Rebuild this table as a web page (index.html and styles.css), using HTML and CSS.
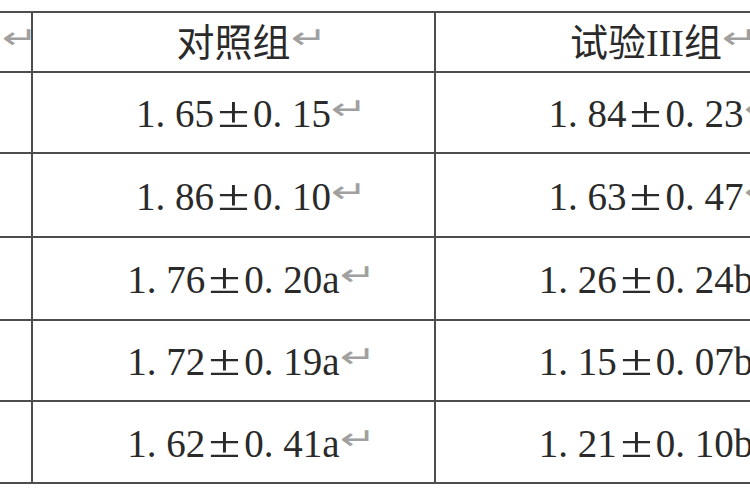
FILE: index.html
```html
<!DOCTYPE html>
<html lang="zh-CN">
<head>
<meta charset="utf-8">
<title>表格</title>
<link rel="stylesheet" href="styles.css">
</head>
<body>
<table class="data">
  <colgroup>
    <col class="c0"><col class="c1"><col class="c2">
  </colgroup>
  <tr class="head">
    <td><span class="pm-mark">↵</span></td>
    <td>对照组<span class="pm-mark">↵</span></td>
    <td>试验III组<span class="pm-mark">↵</span></td>
  </tr>
  <tr class="r1">
    <td></td>
    <td>1<span class="dot">.</span>65<span class="pm">±</span>0<span class="dot">.</span>15<span class="pm-mark">↵</span></td>
    <td>1<span class="dot">.</span>84<span class="pm">±</span>0<span class="dot">.</span>23<span class="pm-mark">↵</span></td>
  </tr>
  <tr class="r2">
    <td></td>
    <td>1<span class="dot">.</span>86<span class="pm">±</span>0<span class="dot">.</span>10<span class="pm-mark">↵</span></td>
    <td>1<span class="dot">.</span>63<span class="pm">±</span>0<span class="dot">.</span>47<span class="pm-mark">↵</span></td>
  </tr>
  <tr class="r3">
    <td></td>
    <td>1<span class="dot">.</span>76<span class="pm">±</span>0<span class="dot">.</span>20a<span class="pm-mark">↵</span></td>
    <td>1<span class="dot">.</span>26<span class="pm">±</span>0<span class="dot">.</span>24b<span class="pm-mark">↵</span></td>
  </tr>
  <tr class="r4">
    <td></td>
    <td>1<span class="dot">.</span>72<span class="pm">±</span>0<span class="dot">.</span>19a<span class="pm-mark">↵</span></td>
    <td>1<span class="dot">.</span>15<span class="pm">±</span>0<span class="dot">.</span>07b<span class="pm-mark">↵</span></td>
  </tr>
  <tr class="r5">
    <td></td>
    <td>1<span class="dot">.</span>62<span class="pm">±</span>0<span class="dot">.</span>41a<span class="pm-mark">↵</span></td>
    <td>1<span class="dot">.</span>21<span class="pm">±</span>0<span class="dot">.</span>10b<span class="pm-mark">↵</span></td>
  </tr>
</table>
</body>
</html>
```
FILE: styles.css
```css
html, body {
  margin: 0;
  padding: 0;
  background: #ffffff;
  overflow: hidden;
  width: 750px;
  height: 500px;
}

.data {
  border-collapse: collapse;
  table-layout: fixed;
  width: 886px;
  margin-top: 11px;
  margin-left: -30px;
  font-family: "Liberation Serif", "Noto Sans CJK SC", serif;
  font-size: 39px;
  color: #2a2a2a;
}

.c0 { width: 61px; }
.c1 { width: 403px; }
.c2 { width: 422px; }

.data td {
  border: 2px solid #4d4d4d;
  padding: 0;
  text-align: center;
  vertical-align: middle;
  white-space: nowrap;
  line-height: 1;
}

.head td { height: 58px; font-size: 38px; }
.r1 td { height: 79px; }
.r2 td { height: 82px; }
.r3 td { height: 81px; }
.r4 td { height: 79px; }
.r5 td { height: 80px; }

.dot {
  display: inline-block;
  width: 0.5em;
  text-align: left;
}

.pm {
  display: inline-block;
  width: 0.87em;
  text-align: center;
  font-size: 1.15em;
  transform: scaleX(1.3);
  line-height: 1;
}

.pm-mark {
  display: inline-block;
  width: 0;
  overflow: visible;
  text-align: left;
  font-family: "DejaVu Sans", sans-serif;
  font-size: 30px;
  color: #a0a0a0;
  vertical-align: 8px;
  transform: scaleX(1.45);
  transform-origin: left center;
}
```
